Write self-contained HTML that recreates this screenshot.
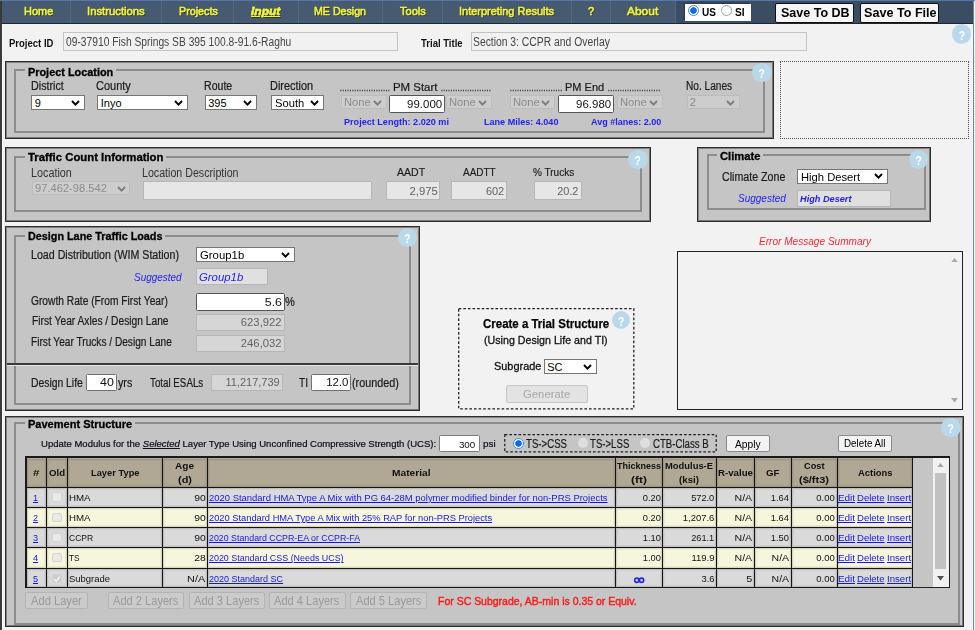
<!DOCTYPE html>
<html><head><meta charset="utf-8"><title>Input</title>
<style>
html,body{margin:0;padding:0;}
body{width:975px;height:630px;overflow:hidden;position:relative;background:#f2f2f2;font-family:"Liberation Sans",sans-serif;}
#pg{position:absolute;left:0;top:0;width:975px;height:630px;overflow:hidden;}
#pg div{position:absolute;}
.t{position:absolute;white-space:nowrap;display:block;}
a{color:#0000ee;}
</style></head>
<body><div id="pg">
<div style="left:0px;top:0px;width:2px;height:630px;background:#3a3a3a;"></div>
<div style="left:2px;top:0px;width:1px;height:630px;background:#f8f8f8;"></div>
<div style="left:972px;top:0px;width:3px;height:630px;background:#f8f8f8;"></div>
<div style="left:973px;top:0px;width:1.4px;height:630px;background:#6a86a6;"></div>
<div style="left:2px;top:0px;width:971px;height:24px;background:#465a72;"></div>
<div style="left:676px;top:0px;width:297px;height:24px;background:#3a4d63;"></div>
<div style="left:0px;top:0px;width:975px;height:1.3px;background:#5577aa;"></div>
<div style="left:2px;top:22.6px;width:971px;height:1.4px;background:#1e2630;"></div>
<div style="left:70px;top:1px;width:1px;height:22px;background:#54697f;"></div>
<div style="left:161px;top:1px;width:1px;height:22px;background:#54697f;"></div>
<div style="left:233px;top:1px;width:1px;height:22px;background:#54697f;"></div>
<div style="left:298px;top:1px;width:1px;height:22px;background:#54697f;"></div>
<div style="left:382px;top:1px;width:1px;height:22px;background:#54697f;"></div>
<div style="left:442px;top:1px;width:1px;height:22px;background:#54697f;"></div>
<div style="left:571px;top:1px;width:1px;height:22px;background:#54697f;"></div>
<div style="left:610px;top:1px;width:1px;height:22px;background:#54697f;"></div>
<div style="left:675px;top:1px;width:1px;height:22px;background:#54697f;"></div>
<span class="t" style="top:6.31px;font-size:11.4px;line-height:11.4px;height:11.4px;color:#f5f534;-webkit-text-stroke:0.55px #f5f534;text-shadow:1px 1px 0 #2a3442;left:24.32px;transform-origin:left center;transform:scaleX(0.9626);">Home</span>
<span class="t" style="top:6.31px;font-size:11.4px;line-height:11.4px;height:11.4px;color:#f5f534;-webkit-text-stroke:0.55px #f5f534;text-shadow:1px 1px 0 #2a3442;left:87.32px;transform-origin:left center;transform:scaleX(0.9915);">Instructions</span>
<span class="t" style="top:6.31px;font-size:11.4px;line-height:11.4px;height:11.4px;color:#f5f534;-webkit-text-stroke:0.55px #f5f534;text-shadow:1px 1px 0 #2a3442;left:178.82px;transform-origin:left center;transform:scaleX(0.9416);">Projects</span>
<span class="t" style="top:6.31px;font-size:11.4px;line-height:11.4px;height:11.4px;color:#f5f534;-webkit-text-stroke:0.55px #f5f534;text-shadow:1px 1px 0 #2a3442;left:314.32px;transform-origin:left center;transform:scaleX(0.9342);">ME Design</span>
<span class="t" style="top:6.31px;font-size:11.4px;line-height:11.4px;height:11.4px;color:#f5f534;-webkit-text-stroke:0.55px #f5f534;text-shadow:1px 1px 0 #2a3442;left:399.82px;transform-origin:left center;transform:scaleX(0.9684);">Tools</span>
<span class="t" style="top:6.31px;font-size:11.4px;line-height:11.4px;height:11.4px;color:#f5f534;-webkit-text-stroke:0.55px #f5f534;text-shadow:1px 1px 0 #2a3442;left:459.32px;transform-origin:left center;transform:scaleX(0.9623);">Interpreting Results</span>
<span class="t" style="top:6.31px;font-size:11.4px;line-height:11.4px;height:11.4px;color:#f5f534;-webkit-text-stroke:0.55px #f5f534;text-shadow:1px 1px 0 #2a3442;left:588.12px;transform-origin:left center;transform:scaleX(0.9859);">?</span>
<span class="t" style="top:6.31px;font-size:11.4px;line-height:11.4px;height:11.4px;color:#f5f534;-webkit-text-stroke:0.55px #f5f534;text-shadow:1px 1px 0 #2a3442;left:627.32px;transform-origin:left center;transform:scaleX(1.0495);">About</span>
<span class="t" style="top:6.31px;font-size:11.4px;line-height:11.4px;height:11.4px;color:#f5f534;font-weight:bold;font-style:italic;-webkit-text-stroke:0.35px #f5f534;text-shadow:1px 1px 0 #2a3442;text-decoration:underline;left:251.32px;transform-origin:left center;transform:scaleX(1.0506);">Input</span>
<div style="left:685px;top:4px;width:66px;height:17px;background:#fff;box-shadow:-1.5px -1.5px 0 #2d3c4f;"></div>
<div style="left:688.2px;top:5.3px;width:11px;height:11px;box-sizing:border-box;border-radius:50%;border:1.5px solid #3f8cff;background:radial-gradient(circle,#0a68ff 0,#0a68ff 2.9px,#fff 3.6px);"></div>
<span class="t" style="top:7.06px;font-size:11.5px;line-height:11.5px;height:11.5px;color:#000;font-weight:bold;left:701.91px;transform-origin:left center;transform:scaleX(0.8737);">US</span>
<div style="left:721.3px;top:5.2px;width:11px;height:11px;box-sizing:border-box;border-radius:50%;border:1.4px solid #a2a2a2;background:#fff;"></div>
<span class="t" style="top:7.06px;font-size:11.5px;line-height:11.5px;height:11.5px;color:#000;font-weight:bold;left:734.51px;transform-origin:left center;transform:scaleX(0.8887);">SI</span>
<div style="left:775px;top:3px;width:79px;height:19.5px;box-sizing:border-box;background:#f6f6f6;border:1.5px solid #111;border-radius:2px;"></div>
<span class="t" style="top:6.03px;font-size:13px;line-height:13px;height:13px;color:#000;font-weight:bold;left:781.02px;transform-origin:left center;transform:scaleX(0.9628);">Save To DB</span>
<div style="left:860px;top:3px;width:79px;height:19.5px;box-sizing:border-box;background:#f6f6f6;border:1.5px solid #111;border-radius:2px;"></div>
<span class="t" style="top:6.03px;font-size:13px;line-height:13px;height:13px;color:#000;font-weight:bold;left:864.02px;transform-origin:left center;transform:scaleX(0.9696);">Save To File</span>
<span class="t" style="top:38.60px;font-size:10px;line-height:10px;height:10px;color:#111;font-weight:bold;left:9.4px;transform-origin:left center;transform:scaleX(0.9510);">Project ID</span>
<div style="left:63px;top:32px;width:335px;height:19px;box-sizing:border-box;background:#f1f1f1;border:1px solid #c4c4c4;"></div>
<span class="t" style="top:36.42px;font-size:12px;line-height:12px;height:12px;color:#454545;left:66.08px;transform-origin:left center;transform:scaleX(0.8551);">09-37910 Fish Springs SB 395 100.8-91.6-Raghu</span>
<span class="t" style="top:38.60px;font-size:10px;line-height:10px;height:10px;color:#111;font-weight:bold;left:421.4px;transform-origin:left center;transform:scaleX(0.9512);">Trial Title</span>
<div style="left:471px;top:32px;width:336px;height:19px;box-sizing:border-box;background:#f1f1f1;border:1px solid #c4c4c4;"></div>
<span class="t" style="top:36.42px;font-size:12px;line-height:12px;height:12px;color:#454545;left:473.08px;transform-origin:left center;transform:scaleX(0.8619);">Section 3: CCPR and Overlay</span>
<div style="left:951.7px;top:24.3px;width:19.8px;height:19.8px;border-radius:50%;background:#b9d9ea;"><span style="position:absolute;left:0;right:0;top:5.5px;text-align:center;font:bold 12px/13px 'Liberation Sans',sans-serif;color:#fff;transform:scaleX(0.86);">?</span></div>
<div style="left:5px;top:61px;width:769px;height:78px;box-sizing:border-box;background:#c5c5c5;border:1px solid #2e2e2e;box-shadow:inset 1px 1px 0 #828282,inset -1px -1px 0 #767676;"></div>
<div style="left:14px;top:69px;width:751px;height:64px;box-sizing:border-box;border:2px solid #8c8c8c;"></div>
<div style="left:25px;top:65px;width:91px;height:12px;background:#c5c5c5;"></div>
<span class="t" style="top:66.51px;font-size:10.8px;line-height:10.8px;height:10.8px;color:#000;font-weight:bold;-webkit-text-stroke:0.3px #000;left:28.35px;transform-origin:left center;transform:scaleX(1.0070);">Project Location</span>
<span class="t" style="top:80.22px;font-size:12px;line-height:12px;height:12px;color:#1c1c1c;-webkit-text-stroke:0.22px #1c1c1c;left:31.28px;transform-origin:left center;transform:scaleX(0.8950);">District</span>
<span class="t" style="top:80.22px;font-size:12px;line-height:12px;height:12px;color:#1c1c1c;-webkit-text-stroke:0.22px #1c1c1c;left:96.28px;transform-origin:left center;transform:scaleX(0.9156);">County</span>
<span class="t" style="top:80.22px;font-size:12px;line-height:12px;height:12px;color:#1c1c1c;-webkit-text-stroke:0.22px #1c1c1c;left:203.88px;transform-origin:left center;transform:scaleX(0.8810);">Route</span>
<span class="t" style="top:80.22px;font-size:12px;line-height:12px;height:12px;color:#1c1c1c;-webkit-text-stroke:0.22px #1c1c1c;left:270.08px;transform-origin:left center;transform:scaleX(0.9105);">Direction</span>
<div style="left:31px;top:95px;width:54px;height:15px;box-sizing:border-box;background:#fff;border:1px solid #767676;border-radius:0;"><svg style="position:absolute;right:4px;top:50%;margin-top:-3px" width="9" height="6" viewBox="0 0 9 6"><path d="M1 1 L4.5 4.6 L8 1" fill="none" stroke="#000" stroke-width="1.9"/></svg></div>
<span class="t" style="top:97.81px;font-size:11px;line-height:11px;height:11px;color:#000;left:34.74px;transform-origin:left center;">9</span>
<div style="left:97px;top:95px;width:90.5px;height:15px;box-sizing:border-box;background:#fff;border:1px solid #767676;border-radius:0;"><svg style="position:absolute;right:4px;top:50%;margin-top:-3px" width="9" height="6" viewBox="0 0 9 6"><path d="M1 1 L4.5 4.6 L8 1" fill="none" stroke="#000" stroke-width="1.9"/></svg></div>
<span class="t" style="top:97.81px;font-size:11px;line-height:11px;height:11px;color:#000;left:100.74px;transform-origin:left center;">Inyo</span>
<div style="left:204.5px;top:95px;width:52.5px;height:15px;box-sizing:border-box;background:#fff;border:1px solid #767676;border-radius:0;"><svg style="position:absolute;right:4px;top:50%;margin-top:-3px" width="9" height="6" viewBox="0 0 9 6"><path d="M1 1 L4.5 4.6 L8 1" fill="none" stroke="#000" stroke-width="1.9"/></svg></div>
<span class="t" style="top:97.81px;font-size:11px;line-height:11px;height:11px;color:#000;left:208.24px;transform-origin:left center;">395</span>
<div style="left:271px;top:95px;width:53px;height:15px;box-sizing:border-box;background:#fff;border:1px solid #767676;border-radius:0;"><svg style="position:absolute;right:4px;top:50%;margin-top:-3px" width="9" height="6" viewBox="0 0 9 6"><path d="M1 1 L4.5 4.6 L8 1" fill="none" stroke="#000" stroke-width="1.9"/></svg></div>
<span class="t" style="top:97.81px;font-size:11px;line-height:11px;height:11px;color:#000;left:274.74px;transform-origin:left center;transform:scaleX(1.0160);">South</span>
<div style="left:340px;top:89.3px;width:50.5px;height:3px;"><svg width="50.5" height="3" viewBox="0 0 50.5 3" style="position:absolute;left:0;top:0"><line x1="0.3" y1="1.5" x2="50.5" y2="1.5" stroke="#3c3c3c" stroke-width="1.3" stroke-dasharray="1.1 1.3"/></svg></div>
<span class="t" style="top:82.31px;font-size:11.2px;line-height:11.2px;height:11.2px;color:#1c1c1c;-webkit-text-stroke:0.22px #1c1c1c;left:393.13px;transform-origin:left center;transform:scaleX(1.0211);">PM Start</span>
<div style="left:441px;top:89.3px;width:50px;height:3px;"><svg width="50" height="3" viewBox="0 0 50 3" style="position:absolute;left:0;top:0"><line x1="0.3" y1="1.5" x2="50" y2="1.5" stroke="#3c3c3c" stroke-width="1.3" stroke-dasharray="1.1 1.3"/></svg></div>
<div style="left:341px;top:95px;width:45.5px;height:14px;box-sizing:border-box;background:#cdcdcd;border:1px solid #bcbcbc;border-radius:1px;"><svg style="position:absolute;right:4px;top:50%;margin-top:-2.2px" width="9" height="6" viewBox="0 0 9 6"><path d="M1 1 L4.5 4.6 L8 1" fill="none" stroke="#7e7e7e" stroke-width="1.9"/></svg></div>
<span class="t" style="top:96.81px;font-size:11px;line-height:11px;height:11px;color:#8c8c8c;left:344.14px;transform-origin:left center;transform:scaleX(1.0195);">None</span>
<div style="left:389px;top:95px;width:56px;height:17.5px;box-sizing:border-box;background:#fff;border:1px solid #555;border-radius:1.5px;"></div>
<span class="t" style="top:98.91px;font-size:11.5px;line-height:11.5px;height:11.5px;color:#111;right:533px;transform-origin:right center;transform:scaleX(0.9965);">99.000</span>
<div style="left:446px;top:95px;width:46px;height:14px;box-sizing:border-box;background:#cdcdcd;border:1px solid #bcbcbc;border-radius:1px;"><svg style="position:absolute;right:4px;top:50%;margin-top:-2.2px" width="9" height="6" viewBox="0 0 9 6"><path d="M1 1 L4.5 4.6 L8 1" fill="none" stroke="#7e7e7e" stroke-width="1.9"/></svg></div>
<span class="t" style="top:96.81px;font-size:11px;line-height:11px;height:11px;color:#8c8c8c;left:449.14px;transform-origin:left center;transform:scaleX(1.0195);">None</span>
<div style="left:509.5px;top:89.3px;width:53.5px;height:3px;"><svg width="53.5" height="3" viewBox="0 0 53.5 3" style="position:absolute;left:0;top:0"><line x1="0.3" y1="1.5" x2="53.5" y2="1.5" stroke="#3c3c3c" stroke-width="1.3" stroke-dasharray="1.1 1.3"/></svg></div>
<span class="t" style="top:82.31px;font-size:11.2px;line-height:11.2px;height:11.2px;color:#1c1c1c;-webkit-text-stroke:0.22px #1c1c1c;left:565.33px;transform-origin:left center;transform:scaleX(0.9858);">PM End</span>
<div style="left:608px;top:89.3px;width:52px;height:3px;"><svg width="52" height="3" viewBox="0 0 52 3" style="position:absolute;left:0;top:0"><line x1="0.3" y1="1.5" x2="52" y2="1.5" stroke="#3c3c3c" stroke-width="1.3" stroke-dasharray="1.1 1.3"/></svg></div>
<div style="left:509.5px;top:95px;width:45.5px;height:14px;box-sizing:border-box;background:#cdcdcd;border:1px solid #bcbcbc;border-radius:1px;"><svg style="position:absolute;right:4px;top:50%;margin-top:-2.2px" width="9" height="6" viewBox="0 0 9 6"><path d="M1 1 L4.5 4.6 L8 1" fill="none" stroke="#7e7e7e" stroke-width="1.9"/></svg></div>
<span class="t" style="top:96.81px;font-size:11px;line-height:11px;height:11px;color:#8c8c8c;left:512.64px;transform-origin:left center;transform:scaleX(1.0195);">None</span>
<div style="left:558px;top:95px;width:56px;height:17.5px;box-sizing:border-box;background:#fff;border:1px solid #555;border-radius:1.5px;"></div>
<span class="t" style="top:98.91px;font-size:11.5px;line-height:11.5px;height:11.5px;color:#111;right:364px;transform-origin:right center;transform:scaleX(0.9965);">96.980</span>
<div style="left:617px;top:95px;width:45.5px;height:14px;box-sizing:border-box;background:#cdcdcd;border:1px solid #bcbcbc;border-radius:1px;"><svg style="position:absolute;right:4px;top:50%;margin-top:-2.2px" width="9" height="6" viewBox="0 0 9 6"><path d="M1 1 L4.5 4.6 L8 1" fill="none" stroke="#7e7e7e" stroke-width="1.9"/></svg></div>
<span class="t" style="top:96.81px;font-size:11px;line-height:11px;height:11px;color:#8c8c8c;left:620.14px;transform-origin:left center;transform:scaleX(1.0195);">None</span>
<span class="t" style="top:118.14px;font-size:9.3px;line-height:9.3px;height:9.3px;color:#2222ee;font-weight:bold;left:344.04px;transform-origin:left center;transform:scaleX(0.9763);">Project Length: 2.020 mi</span>
<span class="t" style="top:118.14px;font-size:9.3px;line-height:9.3px;height:9.3px;color:#2222ee;font-weight:bold;left:484.04px;transform-origin:left center;transform:scaleX(0.9730);">Lane Miles: 4.040</span>
<span class="t" style="top:118.14px;font-size:9.3px;line-height:9.3px;height:9.3px;color:#2222ee;font-weight:bold;left:591.24px;transform-origin:left center;transform:scaleX(0.9682);">Avg #lanes: 2.00</span>
<span class="t" style="top:80.22px;font-size:12px;line-height:12px;height:12px;color:#1c1c1c;-webkit-text-stroke:0.22px #1c1c1c;left:685.98px;transform-origin:left center;transform:scaleX(0.8431);">No. Lanes</span>
<div style="left:686.5px;top:95px;width:53px;height:14px;box-sizing:border-box;background:#cdcdcd;border:1px solid #bcbcbc;border-radius:1px;"><svg style="position:absolute;right:4px;top:50%;margin-top:-2.2px" width="9" height="6" viewBox="0 0 9 6"><path d="M1 1 L4.5 4.6 L8 1" fill="none" stroke="#7e7e7e" stroke-width="1.9"/></svg></div>
<span class="t" style="top:96.81px;font-size:11px;line-height:11px;height:11px;color:#8c8c8c;left:689.64px;transform-origin:left center;">2</span>
<div style="left:752.2px;top:63.1px;width:19.4px;height:19.4px;border-radius:50%;background:#b9d9ea;"><span style="position:absolute;left:0;right:0;top:5.3px;text-align:center;font:bold 12px/13px 'Liberation Sans',sans-serif;color:#fff;transform:scaleX(0.86);">?</span></div>
<div style="left:780px;top:61px;width:189px;height:78px;box-sizing:border-box;border:1px dotted #505050;"></div>
<div style="left:5px;top:147px;width:646px;height:75px;box-sizing:border-box;background:#c5c5c5;border:1px solid #2e2e2e;box-shadow:inset 1px 1px 0 #828282,inset -1px -1px 0 #767676;"></div>
<div style="left:14px;top:156px;width:628px;height:55.5px;box-sizing:border-box;border:2px solid #8c8c8c;"></div>
<div style="left:25px;top:152px;width:141.3px;height:12px;background:#c5c5c5;"></div>
<span class="t" style="top:152.21px;font-size:10.8px;line-height:10.8px;height:10.8px;color:#000;font-weight:bold;-webkit-text-stroke:0.3px #000;left:28.35px;transform-origin:left center;transform:scaleX(1.0505);">Traffic Count Information</span>
<span class="t" style="top:166.62px;font-size:12px;line-height:12px;height:12px;color:#333;left:30.78px;transform-origin:left center;transform:scaleX(0.8996);">Location</span>
<span class="t" style="top:166.62px;font-size:12px;line-height:12px;height:12px;color:#333;left:142.08px;transform-origin:left center;transform:scaleX(0.8877);">Location Description</span>
<div style="left:31.5px;top:181.4px;width:98px;height:14.1px;box-sizing:border-box;background:#cdcdcd;border:1px solid #bcbcbc;border-radius:1px;"><svg style="position:absolute;right:3px;top:50%;margin-top:-2.2px" width="9" height="6" viewBox="0 0 9 6"><path d="M1 1 L4.5 4.6 L8 1" fill="none" stroke="#7e7e7e" stroke-width="1.9"/></svg></div>
<span class="t" style="top:183.26px;font-size:11px;line-height:11px;height:11px;color:#8c8c8c;left:34.64px;transform-origin:left center;transform:scaleX(1.0135);">97.462-98.542</span>
<div style="left:142.8px;top:181px;width:229.2px;height:19px;box-sizing:border-box;background:#e6e6e6;border:1px solid #b6b6b6;"></div>
<span class="t" style="top:166.71px;font-size:11px;line-height:11px;height:11px;color:#1a1a1a;-webkit-text-stroke:0.15px #1a1a1a;left:397.04px;transform-origin:left center;transform:scaleX(0.9580);">AADT</span>
<span class="t" style="top:166.71px;font-size:11px;line-height:11px;height:11px;color:#1a1a1a;-webkit-text-stroke:0.15px #1a1a1a;left:463.34px;transform-origin:left center;transform:scaleX(0.9070);">AADTT</span>
<span class="t" style="top:166.71px;font-size:11px;line-height:11px;height:11px;color:#1a1a1a;-webkit-text-stroke:0.15px #1a1a1a;left:533.34px;transform-origin:left center;transform:scaleX(0.9110);">% Trucks</span>
<div style="left:385.6px;top:181px;width:54.8px;height:19px;box-sizing:border-box;background:#e6e6e6;border:1px solid #b6b6b6;"></div>
<span class="t" style="top:185.67px;font-size:11.5px;line-height:11.5px;height:11.5px;color:#626262;right:537.6px;transform-origin:right center;transform:scaleX(0.9821);">2,975</span>
<div style="left:451.2px;top:181px;width:55.5px;height:19px;box-sizing:border-box;background:#e6e6e6;border:1px solid #b6b6b6;"></div>
<span class="t" style="top:185.67px;font-size:11.5px;line-height:11.5px;height:11.5px;color:#626262;right:471.3px;transform-origin:right center;transform:scaleX(0.9519);">602</span>
<div style="left:534px;top:181px;width:47.5px;height:19px;box-sizing:border-box;background:#e6e6e6;border:1px solid #b6b6b6;"></div>
<span class="t" style="top:185.67px;font-size:11.5px;line-height:11.5px;height:11.5px;color:#626262;right:396.5px;transform-origin:right center;transform:scaleX(0.9497);">20.2</span>
<div style="left:628.2px;top:150.1px;width:19.4px;height:19.4px;border-radius:50%;background:#b9d9ea;"><span style="position:absolute;left:0;right:0;top:5.3px;text-align:center;font:bold 12px/13px 'Liberation Sans',sans-serif;color:#fff;transform:scaleX(0.86);">?</span></div>
<div style="left:697px;top:147px;width:234px;height:75px;box-sizing:border-box;background:#c5c5c5;border:1px solid #2e2e2e;box-shadow:inset 1px 1px 0 #828282,inset -1px -1px 0 #767676;"></div>
<div style="left:707px;top:154px;width:219px;height:56px;box-sizing:border-box;border:2px solid #8c8c8c;"></div>
<div style="left:716.8px;top:150px;width:46.2px;height:12px;background:#c5c5c5;"></div>
<span class="t" style="top:150.61px;font-size:10.8px;line-height:10.8px;height:10.8px;color:#000;font-weight:bold;-webkit-text-stroke:0.3px #000;left:720.15px;transform-origin:left center;transform:scaleX(1.0352);">Climate</span>
<span class="t" style="top:171.12px;font-size:12px;line-height:12px;height:12px;color:#1c1c1c;-webkit-text-stroke:0.22px #1c1c1c;left:722.28px;transform-origin:left center;transform:scaleX(0.8871);">Climate Zone</span>
<div style="left:797px;top:169px;width:90.5px;height:14.5px;box-sizing:border-box;background:#fff;border:1px solid #767676;border-radius:0;"><svg style="position:absolute;right:4px;top:50%;margin-top:-3px" width="9" height="6" viewBox="0 0 9 6"><path d="M1 1 L4.5 4.6 L8 1" fill="none" stroke="#000" stroke-width="1.9"/></svg></div>
<span class="t" style="top:171.56px;font-size:11px;line-height:11px;height:11px;color:#000;left:800.74px;transform-origin:left center;transform:scaleX(1.0195);">High Desert</span>
<span class="t" style="top:193.06px;font-size:11.5px;line-height:11.5px;height:11.5px;color:#2222ee;font-style:italic;left:737.71px;transform-origin:left center;transform:scaleX(0.8703);">Suggested</span>
<div style="left:797px;top:190px;width:94px;height:16.5px;box-sizing:border-box;background:#e0e0e0;border:1px solid #b6b6b6;"></div>
<span class="t" style="top:194.54px;font-size:9.2px;line-height:9.2px;height:9.2px;color:#2222ee;font-weight:bold;font-style:italic;left:800.45px;transform-origin:left center;transform:scaleX(0.9987);">High Desert</span>
<div style="left:908.9px;top:150.1px;width:19.4px;height:19.4px;border-radius:50%;background:#b9d9ea;"><span style="position:absolute;left:0;right:0;top:5.3px;text-align:center;font:bold 12px/13px 'Liberation Sans',sans-serif;color:#fff;transform:scaleX(0.86);">?</span></div>
<div style="left:5px;top:226px;width:415px;height:185px;box-sizing:border-box;background:#c5c5c5;border:1px solid #2e2e2e;box-shadow:inset 1px 1px 0 #828282,inset -1px -1px 0 #767676;"></div>
<div style="left:7px;top:362.5px;width:411px;height:2px;background:#3a3a3a;"></div>
<div style="left:7px;top:364.5px;width:411px;height:1px;background:#e4e4e4;"></div>
<div style="left:14px;top:235px;width:397px;height:170px;box-sizing:border-box;border:2px solid #8c8c8c;"></div>
<div style="left:24.7px;top:231px;width:140.3px;height:12px;background:#c5c5c5;"></div>
<span class="t" style="top:231.01px;font-size:10.8px;line-height:10.8px;height:10.8px;color:#000;font-weight:bold;-webkit-text-stroke:0.3px #000;left:28.05px;transform-origin:left center;transform:scaleX(1.0006);">Design Lane Traffic Loads</span>
<div style="left:7px;top:362.5px;width:411px;height:2px;background:#3a3a3a;"></div>
<div style="left:7px;top:364.5px;width:411px;height:1.2px;background:#e6e6e6;"></div>
<span class="t" style="top:249.42px;font-size:12px;line-height:12px;height:12px;color:#1c1c1c;-webkit-text-stroke:0.22px #1c1c1c;left:30.78px;transform-origin:left center;transform:scaleX(0.8878);">Load Distribution (WIM Station)</span>
<div style="left:196px;top:247px;width:98.5px;height:15px;box-sizing:border-box;background:#fff;border:1px solid #767676;border-radius:0;"><svg style="position:absolute;right:4px;top:50%;margin-top:-3px" width="9" height="6" viewBox="0 0 9 6"><path d="M1 1 L4.5 4.6 L8 1" fill="none" stroke="#000" stroke-width="1.9"/></svg></div>
<span class="t" style="top:249.81px;font-size:11px;line-height:11px;height:11px;color:#000;left:199.74px;transform-origin:left center;transform:scaleX(1.0326);">Group1b</span>
<span class="t" style="top:272.06px;font-size:11.5px;line-height:11.5px;height:11.5px;color:#2222ee;font-style:italic;left:133.81px;transform-origin:left center;transform:scaleX(0.8648);">Suggested</span>
<div style="left:196px;top:268.4px;width:72px;height:17.1px;box-sizing:border-box;background:#e0e0e0;border:1px solid #b6b6b6;"></div>
<span class="t" style="top:272.36px;font-size:11px;line-height:11px;height:11px;color:#2222ee;font-style:italic;left:199.34px;transform-origin:left center;transform:scaleX(1.0326);">Group1b</span>
<span class="t" style="top:295.12px;font-size:12px;line-height:12px;height:12px;color:#1c1c1c;-webkit-text-stroke:0.22px #1c1c1c;left:30.78px;transform-origin:left center;transform:scaleX(0.8513);">Growth Rate (From First Year)</span>
<div style="left:196px;top:293px;width:88.5px;height:17.5px;box-sizing:border-box;background:#fff;border:1px solid #555;border-radius:1.5px;"></div>
<span class="t" style="top:296.92px;font-size:11.5px;line-height:11.5px;height:11.5px;color:#111;right:693.5px;transform-origin:right center;transform:scaleX(1.0791);">5.6</span>
<span class="t" style="top:296.12px;font-size:12px;line-height:12px;height:12px;color:#1c1c1c;-webkit-text-stroke:0.22px #1c1c1c;left:285.28px;transform-origin:left center;transform:scaleX(0.9202);">%</span>
<span class="t" style="top:315.42px;font-size:12px;line-height:12px;height:12px;color:#1c1c1c;-webkit-text-stroke:0.22px #1c1c1c;left:31.68px;transform-origin:left center;transform:scaleX(0.8528);">First Year Axles / Design Lane</span>
<div style="left:196px;top:313.5px;width:88.5px;height:17.5px;box-sizing:border-box;background:#d6d6d6;border:1px solid #b6b6b6;"></div>
<span class="t" style="top:317.42px;font-size:11.5px;line-height:11.5px;height:11.5px;color:#626262;right:693.5px;transform-origin:right center;transform:scaleX(0.9804);">623,922</span>
<span class="t" style="top:336.22px;font-size:12px;line-height:12px;height:12px;color:#1c1c1c;-webkit-text-stroke:0.22px #1c1c1c;left:30.78px;transform-origin:left center;transform:scaleX(0.8445);">First Year Trucks / Design Lane</span>
<div style="left:196px;top:334.5px;width:88.5px;height:17.5px;box-sizing:border-box;background:#d6d6d6;border:1px solid #b6b6b6;"></div>
<span class="t" style="top:338.42px;font-size:11.5px;line-height:11.5px;height:11.5px;color:#626262;right:693.5px;transform-origin:right center;transform:scaleX(0.9804);">246,032</span>
<div style="left:397.9px;top:227.9px;width:19px;height:19px;border-radius:50%;background:#b9d9ea;"><span style="position:absolute;left:0;right:0;top:5.1px;text-align:center;font:bold 12px/13px 'Liberation Sans',sans-serif;color:#fff;transform:scaleX(0.86);">?</span></div>
<span class="t" style="top:377.12px;font-size:12px;line-height:12px;height:12px;color:#1c1c1c;-webkit-text-stroke:0.22px #1c1c1c;left:30.78px;transform-origin:left center;transform:scaleX(0.8630);">Design Life</span>
<div style="left:86px;top:373.5px;width:31px;height:17.5px;box-sizing:border-box;background:#fff;border:1px solid #707070;border-radius:1.5px;"></div>
<span class="t" style="top:377.42px;font-size:11.5px;line-height:11.5px;height:11.5px;color:#111;right:861px;transform-origin:right center;transform:scaleX(1.0757);">40</span>
<span class="t" style="top:377.42px;font-size:12px;line-height:12px;height:12px;color:#1c1c1c;-webkit-text-stroke:0.22px #1c1c1c;left:118.28px;transform-origin:left center;transform:scaleX(0.8888);">yrs</span>
<span class="t" style="top:377.12px;font-size:12px;line-height:12px;height:12px;color:#1c1c1c;-webkit-text-stroke:0.22px #1c1c1c;left:150.28px;transform-origin:left center;transform:scaleX(0.8141);">Total ESALs</span>
<div style="left:210.5px;top:373.5px;width:72.5px;height:17px;box-sizing:border-box;background:#d6d6d6;border:1px solid #b6b6b6;"></div>
<span class="t" style="top:377.17px;font-size:11.5px;line-height:11.5px;height:11.5px;color:#626262;right:695px;transform-origin:right center;transform:scaleX(0.9570);">11,217,739</span>
<span class="t" style="top:377.12px;font-size:12px;line-height:12px;height:12px;color:#1c1c1c;-webkit-text-stroke:0.22px #1c1c1c;left:298.58px;transform-origin:left center;transform:scaleX(0.8452);">TI</span>
<div style="left:311px;top:373.5px;width:40px;height:17.5px;box-sizing:border-box;background:#fff;border:1px solid #707070;border-radius:1.5px;"></div>
<span class="t" style="top:377.42px;font-size:11.5px;line-height:11.5px;height:11.5px;color:#111;right:627px;transform-origin:right center;transform:scaleX(0.9944);">12.0</span>
<span class="t" style="top:377.12px;font-size:12px;line-height:12px;height:12px;color:#1c1c1c;-webkit-text-stroke:0.22px #1c1c1c;left:352.18px;transform-origin:left center;transform:scaleX(0.9018);">(rounded)</span>
<div style="left:458px;top:308px;width:176.5px;height:101.5px;"><svg width="176.5" height="101.5" viewBox="0 0 176.5 101.5" style="position:absolute;left:0;top:0"><rect x="0.7" y="0.7" width="175.1" height="100.1" fill="none" stroke="#1e1e1e" stroke-width="1.25" stroke-dasharray="2.6 2"/></svg></div>
<span class="t" style="top:317.13px;font-size:13px;line-height:13px;height:13px;color:#000;font-weight:bold;-webkit-text-stroke:0.25px #000;left:483.22px;transform-origin:left center;transform:scaleX(0.8823);">Create a Trial Structure</span>
<span class="t" style="top:335.37px;font-size:11.5px;line-height:11.5px;height:11.5px;color:#111;-webkit-text-stroke:0.3px #111;left:484.31px;transform-origin:left center;transform:scaleX(0.9271);">(Using Design Life and TI)</span>
<span class="t" style="top:361.06px;font-size:11.5px;line-height:11.5px;height:11.5px;color:#111;-webkit-text-stroke:0.3px #111;left:494.11px;transform-origin:left center;transform:scaleX(0.9497);">Subgrade</span>
<div style="left:543.5px;top:359px;width:53.5px;height:15px;box-sizing:border-box;background:#fff;border:1px solid #767676;border-radius:0;"><svg style="position:absolute;right:4px;top:50%;margin-top:-3px" width="9" height="6" viewBox="0 0 9 6"><path d="M1 1 L4.5 4.6 L8 1" fill="none" stroke="#000" stroke-width="1.9"/></svg></div>
<span class="t" style="top:361.81px;font-size:11px;line-height:11px;height:11px;color:#000;left:547.24px;transform-origin:left center;">SC</span>
<div style="left:505.5px;top:385px;width:82.5px;height:18px;box-sizing:border-box;background:#e3e3e3;border:1px solid #c6c6c6;border-radius:2px;"></div>
<span class="t" style="top:389.06px;font-size:11.5px;line-height:11.5px;height:11.5px;color:#a8a8a8;left:523.06px;transform-origin:left center;transform:scaleX(0.9857);">Generate</span>
<div style="left:612px;top:310.8px;width:18.4px;height:18.4px;border-radius:50%;background:#b9d9ea;"><span style="position:absolute;left:0;right:0;top:4.8px;text-align:center;font:bold 12px/13px 'Liberation Sans',sans-serif;color:#fff;transform:scaleX(0.86);">?</span></div>
<span class="t" style="top:236.31px;font-size:11px;line-height:11px;height:11px;color:#f02a3a;font-style:italic;left:758.54px;transform-origin:left center;transform:scaleX(0.9161);">Error Message Summary</span>
<div style="left:676.5px;top:250.5px;width:286.5px;height:159px;box-sizing:border-box;border:1px solid #222;background:#f2f2f2;"></div>
<div style="left:950.5px;top:257.5px;width:7px;height:4.5px;"><svg width="7" height="4.5" viewBox="0 0 7 4.5" style="position:absolute;left:0;top:0"><path d="M0 4.5 L3.5 0 L7 4.5Z" fill="#a8a8a8"/></svg></div>
<div style="left:950.5px;top:398px;width:7px;height:4.5px;"><svg width="7" height="4.5" viewBox="0 0 7 4.5" style="position:absolute;left:0;top:0"><path d="M0 0 L3.5 4.5 L7 0Z" fill="#a8a8a8"/></svg></div>
<div style="left:5px;top:416px;width:959px;height:211px;box-sizing:border-box;background:#c5c5c5;border:1px solid #2e2e2e;box-shadow:inset 1px 1px 0 #828282,inset -1px -1px 0 #767676;"></div>
<div style="left:14px;top:422px;width:946px;height:203px;box-sizing:border-box;border:2px solid #8c8c8c;"></div>
<div style="left:25px;top:418px;width:110px;height:12px;background:#c5c5c5;"></div>
<span class="t" style="top:419.11px;font-size:10.8px;line-height:10.8px;height:10.8px;color:#000;font-weight:bold;-webkit-text-stroke:0.3px #000;left:28.35px;transform-origin:left center;transform:scaleX(1.0213);">Pavement Structure</span>
<span class="t" style="top:440.09px;font-size:9px;line-height:9px;height:9px;color:#0e0e1c;-webkit-text-stroke:0.2px #0e0e1c;left:41.26px;transform-origin:left center;transform:scaleX(1.0594);">Update Modulus for the <i style="text-decoration:underline">Selected</i> Layer Type Using Unconfined Compressive Strength (UCS):</span>
<div style="left:439px;top:435px;width:41px;height:17px;box-sizing:border-box;background:#fff;border:1px solid #7c7c7c;border-radius:1.5px;"></div>
<span class="t" style="top:439.50px;font-size:9.8px;line-height:9.8px;height:9.8px;color:#111;right:499.4px;transform-origin:right center;transform:scaleX(1.0073);">300</span>
<span class="t" style="top:440.49px;font-size:9px;line-height:9px;height:9px;color:#0e0e1c;-webkit-text-stroke:0.2px #0e0e1c;left:483.26px;transform-origin:left center;transform:scaleX(1.0933);">psi</span>
<div style="left:504px;top:434px;width:213px;height:18.7px;"><svg width="213" height="18.69999999999999" viewBox="0 0 213 18.69999999999999" style="position:absolute;left:0;top:0"><rect x="0.7" y="0.7" width="211.6" height="17.29999999999999" fill="none" stroke="#1e1e1e" stroke-width="1.25" stroke-dasharray="2.6 2"/></svg></div>
<div style="left:513px;top:437.8px;width:11px;height:11px;box-sizing:border-box;border-radius:50%;border:1.5px solid #3f8cff;background:radial-gradient(circle,#0a68ff 0,#0a68ff 2.9px,#fff 3.6px);"></div>
<span class="t" style="top:438.42px;font-size:12px;line-height:12px;height:12px;color:#1c1c1c;-webkit-text-stroke:0.22px #1c1c1c;left:526.28px;transform-origin:left center;transform:scaleX(0.8041);">TS-&gt;CSS</span>
<div style="left:578px;top:438.3px;width:10px;height:10px;border-radius:50%;background:#dedede;"></div>
<span class="t" style="top:438.42px;font-size:12px;line-height:12px;height:12px;color:#1c1c1c;-webkit-text-stroke:0.22px #1c1c1c;left:590.28px;transform-origin:left center;transform:scaleX(0.8019);">TS-&gt;LSS</span>
<div style="left:640px;top:438.3px;width:10px;height:10px;border-radius:50%;background:#dedede;"></div>
<span class="t" style="top:438.42px;font-size:12px;line-height:12px;height:12px;color:#1c1c1c;-webkit-text-stroke:0.22px #1c1c1c;left:652.88px;transform-origin:left center;transform:scaleX(0.8035);">CTB-Class B</span>
<div style="left:725.5px;top:435px;width:44.5px;height:16.5px;box-sizing:border-box;background:#f3f3f3;border:1px solid #8a8a8a;border-radius:2px;"></div>
<span class="t" style="top:438.81px;font-size:10.5px;line-height:10.5px;height:10.5px;color:#000;left:734.87px;transform-origin:left center;transform:scaleX(0.9768);">Apply</span>
<div style="left:837.5px;top:435px;width:54.5px;height:16.5px;box-sizing:border-box;background:#f3f3f3;border:1px solid #8a8a8a;border-radius:2px;"></div>
<span class="t" style="top:439.05px;font-size:10px;line-height:10px;height:10px;color:#000;left:844.0px;transform-origin:left center;transform:scaleX(0.9799);">Delete All</span>
<div style="left:941.3px;top:417.7px;width:19.4px;height:19.4px;border-radius:50%;background:#b9d9ea;"><span style="position:absolute;left:0;right:0;top:5.3px;text-align:center;font:bold 12px/13px 'Liberation Sans',sans-serif;color:#fff;transform:scaleX(0.86);">?</span></div>
<div style="left:25px;top:456px;width:925px;height:132px;box-sizing:border-box;background:#c5c5c5;border:1px solid #222;"></div>
<div style="left:25px;top:457px;width:888px;height:30px;background:#b0a894;"></div>
<div style="left:25px;top:487px;width:888px;height:20.5px;background:#dadada;"></div>
<div style="left:25px;top:507.5px;width:888px;height:20.5px;background:#f6f6dc;"></div>
<div style="left:25px;top:528px;width:888px;height:20px;background:#dadada;"></div>
<div style="left:25px;top:548px;width:888px;height:20.5px;background:#f6f6dc;"></div>
<div style="left:25px;top:568.5px;width:888px;height:18.5px;background:#dadada;"></div>
<div style="left:27px;top:459px;width:19px;height:28px;box-shadow:inset 0 0 0 1px rgba(60,60,60,0.12),inset 0 0 0 2px rgba(60,60,60,0.05);"></div>
<div style="left:47px;top:459px;width:20px;height:28px;box-shadow:inset 0 0 0 1px rgba(60,60,60,0.12),inset 0 0 0 2px rgba(60,60,60,0.05);"></div>
<div style="left:68px;top:459px;width:94px;height:28px;box-shadow:inset 0 0 0 1px rgba(60,60,60,0.12),inset 0 0 0 2px rgba(60,60,60,0.05);"></div>
<div style="left:163px;top:459px;width:44px;height:28px;box-shadow:inset 0 0 0 1px rgba(60,60,60,0.12),inset 0 0 0 2px rgba(60,60,60,0.05);"></div>
<div style="left:208px;top:459px;width:407px;height:28px;box-shadow:inset 0 0 0 1px rgba(60,60,60,0.12),inset 0 0 0 2px rgba(60,60,60,0.05);"></div>
<div style="left:616px;top:459px;width:46px;height:28px;box-shadow:inset 0 0 0 1px rgba(60,60,60,0.12),inset 0 0 0 2px rgba(60,60,60,0.05);"></div>
<div style="left:663px;top:459px;width:53px;height:28px;box-shadow:inset 0 0 0 1px rgba(60,60,60,0.12),inset 0 0 0 2px rgba(60,60,60,0.05);"></div>
<div style="left:717px;top:459px;width:37px;height:28px;box-shadow:inset 0 0 0 1px rgba(60,60,60,0.12),inset 0 0 0 2px rgba(60,60,60,0.05);"></div>
<div style="left:755px;top:459px;width:36px;height:28px;box-shadow:inset 0 0 0 1px rgba(60,60,60,0.12),inset 0 0 0 2px rgba(60,60,60,0.05);"></div>
<div style="left:792px;top:459px;width:45px;height:28px;box-shadow:inset 0 0 0 1px rgba(60,60,60,0.12),inset 0 0 0 2px rgba(60,60,60,0.05);"></div>
<div style="left:838px;top:459px;width:74px;height:28px;box-shadow:inset 0 0 0 1px rgba(60,60,60,0.12),inset 0 0 0 2px rgba(60,60,60,0.05);"></div>
<div style="left:27px;top:488px;width:19px;height:19px;box-shadow:inset 0 0 0 1px rgba(60,60,60,0.12),inset 0 0 0 2px rgba(60,60,60,0.05);"></div>
<div style="left:47px;top:488px;width:20px;height:19px;box-shadow:inset 0 0 0 1px rgba(60,60,60,0.12),inset 0 0 0 2px rgba(60,60,60,0.05);"></div>
<div style="left:68px;top:488px;width:94px;height:19px;box-shadow:inset 0 0 0 1px rgba(60,60,60,0.12),inset 0 0 0 2px rgba(60,60,60,0.05);"></div>
<div style="left:163px;top:488px;width:44px;height:19px;box-shadow:inset 0 0 0 1px rgba(60,60,60,0.12),inset 0 0 0 2px rgba(60,60,60,0.05);"></div>
<div style="left:208px;top:488px;width:407px;height:19px;box-shadow:inset 0 0 0 1px rgba(60,60,60,0.12),inset 0 0 0 2px rgba(60,60,60,0.05);"></div>
<div style="left:616px;top:488px;width:46px;height:19px;box-shadow:inset 0 0 0 1px rgba(60,60,60,0.12),inset 0 0 0 2px rgba(60,60,60,0.05);"></div>
<div style="left:663px;top:488px;width:53px;height:19px;box-shadow:inset 0 0 0 1px rgba(60,60,60,0.12),inset 0 0 0 2px rgba(60,60,60,0.05);"></div>
<div style="left:717px;top:488px;width:37px;height:19px;box-shadow:inset 0 0 0 1px rgba(60,60,60,0.12),inset 0 0 0 2px rgba(60,60,60,0.05);"></div>
<div style="left:755px;top:488px;width:36px;height:19px;box-shadow:inset 0 0 0 1px rgba(60,60,60,0.12),inset 0 0 0 2px rgba(60,60,60,0.05);"></div>
<div style="left:792px;top:488px;width:45px;height:19px;box-shadow:inset 0 0 0 1px rgba(60,60,60,0.12),inset 0 0 0 2px rgba(60,60,60,0.05);"></div>
<div style="left:838px;top:488px;width:74px;height:19px;box-shadow:inset 0 0 0 1px rgba(60,60,60,0.12),inset 0 0 0 2px rgba(60,60,60,0.05);"></div>
<div style="left:27px;top:508px;width:19px;height:19px;box-shadow:inset 0 0 0 1px rgba(60,60,60,0.12),inset 0 0 0 2px rgba(60,60,60,0.05);"></div>
<div style="left:47px;top:508px;width:20px;height:19px;box-shadow:inset 0 0 0 1px rgba(60,60,60,0.12),inset 0 0 0 2px rgba(60,60,60,0.05);"></div>
<div style="left:68px;top:508px;width:94px;height:19px;box-shadow:inset 0 0 0 1px rgba(60,60,60,0.12),inset 0 0 0 2px rgba(60,60,60,0.05);"></div>
<div style="left:163px;top:508px;width:44px;height:19px;box-shadow:inset 0 0 0 1px rgba(60,60,60,0.12),inset 0 0 0 2px rgba(60,60,60,0.05);"></div>
<div style="left:208px;top:508px;width:407px;height:19px;box-shadow:inset 0 0 0 1px rgba(60,60,60,0.12),inset 0 0 0 2px rgba(60,60,60,0.05);"></div>
<div style="left:616px;top:508px;width:46px;height:19px;box-shadow:inset 0 0 0 1px rgba(60,60,60,0.12),inset 0 0 0 2px rgba(60,60,60,0.05);"></div>
<div style="left:663px;top:508px;width:53px;height:19px;box-shadow:inset 0 0 0 1px rgba(60,60,60,0.12),inset 0 0 0 2px rgba(60,60,60,0.05);"></div>
<div style="left:717px;top:508px;width:37px;height:19px;box-shadow:inset 0 0 0 1px rgba(60,60,60,0.12),inset 0 0 0 2px rgba(60,60,60,0.05);"></div>
<div style="left:755px;top:508px;width:36px;height:19px;box-shadow:inset 0 0 0 1px rgba(60,60,60,0.12),inset 0 0 0 2px rgba(60,60,60,0.05);"></div>
<div style="left:792px;top:508px;width:45px;height:19px;box-shadow:inset 0 0 0 1px rgba(60,60,60,0.12),inset 0 0 0 2px rgba(60,60,60,0.05);"></div>
<div style="left:838px;top:508px;width:74px;height:19px;box-shadow:inset 0 0 0 1px rgba(60,60,60,0.12),inset 0 0 0 2px rgba(60,60,60,0.05);"></div>
<div style="left:27px;top:528px;width:19px;height:19px;box-shadow:inset 0 0 0 1px rgba(60,60,60,0.12),inset 0 0 0 2px rgba(60,60,60,0.05);"></div>
<div style="left:47px;top:528px;width:20px;height:19px;box-shadow:inset 0 0 0 1px rgba(60,60,60,0.12),inset 0 0 0 2px rgba(60,60,60,0.05);"></div>
<div style="left:68px;top:528px;width:94px;height:19px;box-shadow:inset 0 0 0 1px rgba(60,60,60,0.12),inset 0 0 0 2px rgba(60,60,60,0.05);"></div>
<div style="left:163px;top:528px;width:44px;height:19px;box-shadow:inset 0 0 0 1px rgba(60,60,60,0.12),inset 0 0 0 2px rgba(60,60,60,0.05);"></div>
<div style="left:208px;top:528px;width:407px;height:19px;box-shadow:inset 0 0 0 1px rgba(60,60,60,0.12),inset 0 0 0 2px rgba(60,60,60,0.05);"></div>
<div style="left:616px;top:528px;width:46px;height:19px;box-shadow:inset 0 0 0 1px rgba(60,60,60,0.12),inset 0 0 0 2px rgba(60,60,60,0.05);"></div>
<div style="left:663px;top:528px;width:53px;height:19px;box-shadow:inset 0 0 0 1px rgba(60,60,60,0.12),inset 0 0 0 2px rgba(60,60,60,0.05);"></div>
<div style="left:717px;top:528px;width:37px;height:19px;box-shadow:inset 0 0 0 1px rgba(60,60,60,0.12),inset 0 0 0 2px rgba(60,60,60,0.05);"></div>
<div style="left:755px;top:528px;width:36px;height:19px;box-shadow:inset 0 0 0 1px rgba(60,60,60,0.12),inset 0 0 0 2px rgba(60,60,60,0.05);"></div>
<div style="left:792px;top:528px;width:45px;height:19px;box-shadow:inset 0 0 0 1px rgba(60,60,60,0.12),inset 0 0 0 2px rgba(60,60,60,0.05);"></div>
<div style="left:838px;top:528px;width:74px;height:19px;box-shadow:inset 0 0 0 1px rgba(60,60,60,0.12),inset 0 0 0 2px rgba(60,60,60,0.05);"></div>
<div style="left:27px;top:548px;width:19px;height:20px;box-shadow:inset 0 0 0 1px rgba(60,60,60,0.12),inset 0 0 0 2px rgba(60,60,60,0.05);"></div>
<div style="left:47px;top:548px;width:20px;height:20px;box-shadow:inset 0 0 0 1px rgba(60,60,60,0.12),inset 0 0 0 2px rgba(60,60,60,0.05);"></div>
<div style="left:68px;top:548px;width:94px;height:20px;box-shadow:inset 0 0 0 1px rgba(60,60,60,0.12),inset 0 0 0 2px rgba(60,60,60,0.05);"></div>
<div style="left:163px;top:548px;width:44px;height:20px;box-shadow:inset 0 0 0 1px rgba(60,60,60,0.12),inset 0 0 0 2px rgba(60,60,60,0.05);"></div>
<div style="left:208px;top:548px;width:407px;height:20px;box-shadow:inset 0 0 0 1px rgba(60,60,60,0.12),inset 0 0 0 2px rgba(60,60,60,0.05);"></div>
<div style="left:616px;top:548px;width:46px;height:20px;box-shadow:inset 0 0 0 1px rgba(60,60,60,0.12),inset 0 0 0 2px rgba(60,60,60,0.05);"></div>
<div style="left:663px;top:548px;width:53px;height:20px;box-shadow:inset 0 0 0 1px rgba(60,60,60,0.12),inset 0 0 0 2px rgba(60,60,60,0.05);"></div>
<div style="left:717px;top:548px;width:37px;height:20px;box-shadow:inset 0 0 0 1px rgba(60,60,60,0.12),inset 0 0 0 2px rgba(60,60,60,0.05);"></div>
<div style="left:755px;top:548px;width:36px;height:20px;box-shadow:inset 0 0 0 1px rgba(60,60,60,0.12),inset 0 0 0 2px rgba(60,60,60,0.05);"></div>
<div style="left:792px;top:548px;width:45px;height:20px;box-shadow:inset 0 0 0 1px rgba(60,60,60,0.12),inset 0 0 0 2px rgba(60,60,60,0.05);"></div>
<div style="left:838px;top:548px;width:74px;height:20px;box-shadow:inset 0 0 0 1px rgba(60,60,60,0.12),inset 0 0 0 2px rgba(60,60,60,0.05);"></div>
<div style="left:27px;top:569px;width:19px;height:18px;box-shadow:inset 0 0 0 1px rgba(60,60,60,0.12),inset 0 0 0 2px rgba(60,60,60,0.05);"></div>
<div style="left:47px;top:569px;width:20px;height:18px;box-shadow:inset 0 0 0 1px rgba(60,60,60,0.12),inset 0 0 0 2px rgba(60,60,60,0.05);"></div>
<div style="left:68px;top:569px;width:94px;height:18px;box-shadow:inset 0 0 0 1px rgba(60,60,60,0.12),inset 0 0 0 2px rgba(60,60,60,0.05);"></div>
<div style="left:163px;top:569px;width:44px;height:18px;box-shadow:inset 0 0 0 1px rgba(60,60,60,0.12),inset 0 0 0 2px rgba(60,60,60,0.05);"></div>
<div style="left:208px;top:569px;width:407px;height:18px;box-shadow:inset 0 0 0 1px rgba(60,60,60,0.12),inset 0 0 0 2px rgba(60,60,60,0.05);"></div>
<div style="left:616px;top:569px;width:46px;height:18px;box-shadow:inset 0 0 0 1px rgba(60,60,60,0.12),inset 0 0 0 2px rgba(60,60,60,0.05);"></div>
<div style="left:663px;top:569px;width:53px;height:18px;box-shadow:inset 0 0 0 1px rgba(60,60,60,0.12),inset 0 0 0 2px rgba(60,60,60,0.05);"></div>
<div style="left:717px;top:569px;width:37px;height:18px;box-shadow:inset 0 0 0 1px rgba(60,60,60,0.12),inset 0 0 0 2px rgba(60,60,60,0.05);"></div>
<div style="left:755px;top:569px;width:36px;height:18px;box-shadow:inset 0 0 0 1px rgba(60,60,60,0.12),inset 0 0 0 2px rgba(60,60,60,0.05);"></div>
<div style="left:792px;top:569px;width:45px;height:18px;box-shadow:inset 0 0 0 1px rgba(60,60,60,0.12),inset 0 0 0 2px rgba(60,60,60,0.05);"></div>
<div style="left:838px;top:569px;width:74px;height:18px;box-shadow:inset 0 0 0 1px rgba(60,60,60,0.12),inset 0 0 0 2px rgba(60,60,60,0.05);"></div>
<div style="left:46px;top:457px;width:1px;height:131px;background:#151515;"></div>
<div style="left:67px;top:457px;width:1px;height:131px;background:#151515;"></div>
<div style="left:162px;top:457px;width:1px;height:131px;background:#151515;"></div>
<div style="left:207px;top:457px;width:1px;height:131px;background:#151515;"></div>
<div style="left:615px;top:457px;width:1px;height:131px;background:#151515;"></div>
<div style="left:662px;top:457px;width:1px;height:131px;background:#151515;"></div>
<div style="left:716px;top:457px;width:1px;height:131px;background:#151515;"></div>
<div style="left:754px;top:457px;width:1px;height:131px;background:#151515;"></div>
<div style="left:791px;top:457px;width:1px;height:131px;background:#151515;"></div>
<div style="left:837px;top:457px;width:1px;height:131px;background:#151515;"></div>
<div style="left:912px;top:457px;width:1px;height:131px;background:#151515;"></div>
<div style="left:25px;top:487px;width:888px;height:1px;background:#151515;"></div>
<div style="left:25px;top:507px;width:888px;height:1px;background:#151515;"></div>
<div style="left:25px;top:527px;width:888px;height:1px;background:#151515;"></div>
<div style="left:25px;top:547px;width:888px;height:1px;background:#151515;"></div>
<div style="left:25px;top:568px;width:888px;height:1px;background:#151515;"></div>
<div style="left:25px;top:587px;width:888px;height:1px;background:#151515;"></div>
<div style="left:25px;top:456px;width:925px;height:2px;background:#1a1a1a;"></div>
<div style="left:25px;top:456px;width:2px;height:132px;background:#1a1a1a;"></div>
<span class="t" style="top:468.99px;font-size:9.2px;line-height:9.2px;height:9.2px;color:#111;font-weight:bold;left:32.55px;transform-origin:left center;transform:scaleX(1.2706);">#</span>
<span class="t" style="top:468.99px;font-size:9.2px;line-height:9.2px;height:9.2px;color:#111;font-weight:bold;left:49.0px;transform-origin:left center;transform:scaleX(1.0457);">Old</span>
<span class="t" style="top:468.99px;font-size:9.2px;line-height:9.2px;height:9.2px;color:#111;font-weight:bold;left:90.55px;transform-origin:left center;transform:scaleX(1.0140);">Layer Type</span>
<span class="t" style="top:462.49px;font-size:9.2px;line-height:9.2px;height:9.2px;color:#111;font-weight:bold;left:175.2px;transform-origin:left center;transform:scaleX(1.0952);">Age</span>
<span class="t" style="top:475.99px;font-size:9.2px;line-height:9.2px;height:9.2px;color:#111;font-weight:bold;left:177.7px;transform-origin:left center;transform:scaleX(1.1941);">(d)</span>
<span class="t" style="top:468.99px;font-size:9.2px;line-height:9.2px;height:9.2px;color:#111;font-weight:bold;left:392.0px;transform-origin:left center;transform:scaleX(1.1088);">Material</span>
<span class="t" style="top:462.49px;font-size:9.2px;line-height:9.2px;height:9.2px;color:#111;font-weight:bold;left:616.95px;transform-origin:left center;transform:scaleX(0.9794);">Thickness</span>
<span class="t" style="top:475.99px;font-size:9.2px;line-height:9.2px;height:9.2px;color:#111;font-weight:bold;left:630.95px;transform-origin:left center;transform:scaleX(1.3000);">(ft)</span>
<span class="t" style="top:462.49px;font-size:9.2px;line-height:9.2px;height:9.2px;color:#111;font-weight:bold;left:665.45px;transform-origin:left center;transform:scaleX(1.0226);">Modulus-E</span>
<span class="t" style="top:475.99px;font-size:9.2px;line-height:9.2px;height:9.2px;color:#111;font-weight:bold;left:679.45px;transform-origin:left center;transform:scaleX(1.0585);">(ksi)</span>
<span class="t" style="top:468.99px;font-size:9.2px;line-height:9.2px;height:9.2px;color:#111;font-weight:bold;left:717.65px;transform-origin:left center;transform:scaleX(1.0545);">R-value</span>
<span class="t" style="top:468.99px;font-size:9.2px;line-height:9.2px;height:9.2px;color:#111;font-weight:bold;left:766.05px;transform-origin:left center;transform:scaleX(1.0585);">GF</span>
<span class="t" style="top:462.49px;font-size:9.2px;line-height:9.2px;height:9.2px;color:#111;font-weight:bold;left:804.05px;transform-origin:left center;transform:scaleX(1.0044);">Cost</span>
<span class="t" style="top:475.99px;font-size:9.2px;line-height:9.2px;height:9.2px;color:#111;font-weight:bold;left:799.3px;transform-origin:left center;transform:scaleX(1.1997);">($/ft3)</span>
<span class="t" style="top:468.99px;font-size:9.2px;line-height:9.2px;height:9.2px;color:#111;font-weight:bold;left:857.55px;transform-origin:left center;transform:scaleX(1.0240);">Actions</span>
<span class="t" style="top:492.80px;font-size:9.7px;line-height:9.7px;height:9.7px;color:#1515e8;text-decoration:underline;left:32.92px;transform-origin:left center;transform:scaleX(0.9400);">1</span>
<div style="left:52.3px;top:492.4px;width:9.4px;height:9.5px;box-sizing:border-box;border:1px solid #d4d4d4;border-radius:2px;background:#e9e9e9;"></div>
<span class="t" style="top:492.80px;font-size:9.7px;line-height:9.7px;height:9.7px;color:#111;left:69.12px;transform-origin:left center;transform:scaleX(1.0017);">HMA</span>
<span class="t" style="top:492.80px;font-size:9.7px;line-height:9.7px;height:9.7px;color:#111;right:769.5px;transform-origin:right center;transform:scaleX(1.0729);">90</span>
<span class="t" style="top:492.80px;font-size:9.7px;line-height:9.7px;height:9.7px;color:#1515e8;text-decoration:underline;left:209.42px;transform-origin:left center;transform:scaleX(0.9756);">2020 Standard HMA Type A Mix with PG 64-28M polymer modified binder for non-PRS Projects</span>
<span class="t" style="top:492.80px;font-size:9.7px;line-height:9.7px;height:9.7px;color:#111;right:314.5px;transform-origin:right center;transform:scaleX(0.9580);">0.20</span>
<span class="t" style="top:492.80px;font-size:9.7px;line-height:9.7px;height:9.7px;color:#111;right:260.70000000000005px;transform-origin:right center;transform:scaleX(0.9512);">572.0</span>
<span class="t" style="top:492.80px;font-size:9.7px;line-height:9.7px;height:9.7px;color:#111;right:223px;transform-origin:right center;transform:scaleX(1.0873);">N/A</span>
<span class="t" style="top:492.80px;font-size:9.7px;line-height:9.7px;height:9.7px;color:#111;right:185.70000000000005px;transform-origin:right center;transform:scaleX(0.9580);">1.64</span>
<span class="t" style="top:492.80px;font-size:9.7px;line-height:9.7px;height:9.7px;color:#111;right:140px;transform-origin:right center;transform:scaleX(0.9845);">0.00</span>
<span class="t" style="top:492.80px;font-size:9.7px;line-height:9.7px;height:9.7px;color:#1515e8;text-decoration:underline;left:838.42px;transform-origin:left center;transform:scaleX(1.0218);">Edit</span>
<span class="t" style="top:492.80px;font-size:9.7px;line-height:9.7px;height:9.7px;color:#1515e8;text-decoration:underline;left:857.42px;transform-origin:left center;transform:scaleX(0.9840);">Delete</span>
<span class="t" style="top:492.80px;font-size:9.7px;line-height:9.7px;height:9.7px;color:#1515e8;text-decoration:underline;left:886.92px;transform-origin:left center;transform:scaleX(0.9931);">Insert</span>
<span class="t" style="top:513.15px;font-size:9.7px;line-height:9.7px;height:9.7px;color:#1515e8;text-decoration:underline;left:32.92px;transform-origin:left center;transform:scaleX(0.9400);">2</span>
<div style="left:52.3px;top:512.8px;width:9.4px;height:9.4px;box-sizing:border-box;border:1px solid #d4d4d4;border-radius:2px;background:#e9e9e9;"></div>
<span class="t" style="top:513.15px;font-size:9.7px;line-height:9.7px;height:9.7px;color:#111;left:69.12px;transform-origin:left center;transform:scaleX(1.0017);">HMA</span>
<span class="t" style="top:513.15px;font-size:9.7px;line-height:9.7px;height:9.7px;color:#111;right:769.5px;transform-origin:right center;transform:scaleX(1.0729);">90</span>
<span class="t" style="top:513.15px;font-size:9.7px;line-height:9.7px;height:9.7px;color:#1515e8;text-decoration:underline;left:209.42px;transform-origin:left center;transform:scaleX(0.9605);">2020 Standard HMA Type A Mix with 25% RAP for non-PRS Projects</span>
<span class="t" style="top:513.15px;font-size:9.7px;line-height:9.7px;height:9.7px;color:#111;right:314.5px;transform-origin:right center;transform:scaleX(0.9580);">0.20</span>
<span class="t" style="top:513.15px;font-size:9.7px;line-height:9.7px;height:9.7px;color:#111;right:260.70000000000005px;transform-origin:right center;transform:scaleX(0.9765);">1,207.6</span>
<span class="t" style="top:513.15px;font-size:9.7px;line-height:9.7px;height:9.7px;color:#111;right:223px;transform-origin:right center;transform:scaleX(1.0873);">N/A</span>
<span class="t" style="top:513.15px;font-size:9.7px;line-height:9.7px;height:9.7px;color:#111;right:185.70000000000005px;transform-origin:right center;transform:scaleX(0.9580);">1.64</span>
<span class="t" style="top:513.15px;font-size:9.7px;line-height:9.7px;height:9.7px;color:#111;right:140px;transform-origin:right center;transform:scaleX(0.9845);">0.00</span>
<span class="t" style="top:513.15px;font-size:9.7px;line-height:9.7px;height:9.7px;color:#1515e8;text-decoration:underline;left:838.42px;transform-origin:left center;transform:scaleX(1.0218);">Edit</span>
<span class="t" style="top:513.15px;font-size:9.7px;line-height:9.7px;height:9.7px;color:#1515e8;text-decoration:underline;left:857.42px;transform-origin:left center;transform:scaleX(0.9840);">Delete</span>
<span class="t" style="top:513.15px;font-size:9.7px;line-height:9.7px;height:9.7px;color:#1515e8;text-decoration:underline;left:886.92px;transform-origin:left center;transform:scaleX(0.9931);">Insert</span>
<span class="t" style="top:533.35px;font-size:9.7px;line-height:9.7px;height:9.7px;color:#1515e8;text-decoration:underline;left:32.92px;transform-origin:left center;transform:scaleX(0.9400);">3</span>
<div style="left:52.3px;top:533px;width:9.4px;height:9.4px;box-sizing:border-box;border:1px solid #d4d4d4;border-radius:2px;background:#e9e9e9;"></div>
<span class="t" style="top:533.35px;font-size:9.7px;line-height:9.7px;height:9.7px;color:#111;left:69.12px;transform-origin:left center;transform:scaleX(0.8767);">CCPR</span>
<span class="t" style="top:533.35px;font-size:9.7px;line-height:9.7px;height:9.7px;color:#111;right:769.5px;transform-origin:right center;transform:scaleX(1.0729);">90</span>
<span class="t" style="top:533.35px;font-size:9.7px;line-height:9.7px;height:9.7px;color:#1515e8;text-decoration:underline;left:209.42px;transform-origin:left center;transform:scaleX(0.9109);">2020 Standard CCPR-EA or CCPR-FA</span>
<span class="t" style="top:533.35px;font-size:9.7px;line-height:9.7px;height:9.7px;color:#111;right:314.5px;transform-origin:right center;transform:scaleX(0.9580);">1.10</span>
<span class="t" style="top:533.35px;font-size:9.7px;line-height:9.7px;height:9.7px;color:#111;right:260.70000000000005px;transform-origin:right center;transform:scaleX(0.9512);">261.1</span>
<span class="t" style="top:533.35px;font-size:9.7px;line-height:9.7px;height:9.7px;color:#111;right:223px;transform-origin:right center;transform:scaleX(1.0873);">N/A</span>
<span class="t" style="top:533.35px;font-size:9.7px;line-height:9.7px;height:9.7px;color:#111;right:185.70000000000005px;transform-origin:right center;transform:scaleX(0.9580);">1.50</span>
<span class="t" style="top:533.35px;font-size:9.7px;line-height:9.7px;height:9.7px;color:#111;right:140px;transform-origin:right center;transform:scaleX(0.9845);">0.00</span>
<span class="t" style="top:533.35px;font-size:9.7px;line-height:9.7px;height:9.7px;color:#1515e8;text-decoration:underline;left:838.42px;transform-origin:left center;transform:scaleX(1.0218);">Edit</span>
<span class="t" style="top:533.35px;font-size:9.7px;line-height:9.7px;height:9.7px;color:#1515e8;text-decoration:underline;left:857.42px;transform-origin:left center;transform:scaleX(0.9840);">Delete</span>
<span class="t" style="top:533.35px;font-size:9.7px;line-height:9.7px;height:9.7px;color:#1515e8;text-decoration:underline;left:886.92px;transform-origin:left center;transform:scaleX(0.9931);">Insert</span>
<span class="t" style="top:553.45px;font-size:9.7px;line-height:9.7px;height:9.7px;color:#1515e8;text-decoration:underline;left:32.92px;transform-origin:left center;transform:scaleX(0.9400);">4</span>
<div style="left:52.3px;top:553.1px;width:9.4px;height:9.4px;box-sizing:border-box;border:1px solid #d4d4d4;border-radius:2px;background:#e9e9e9;"></div>
<span class="t" style="top:553.45px;font-size:9.7px;line-height:9.7px;height:9.7px;color:#111;left:69.12px;transform-origin:left center;transform:scaleX(0.8528);">TS</span>
<span class="t" style="top:553.45px;font-size:9.7px;line-height:9.7px;height:9.7px;color:#111;right:769.5px;transform-origin:right center;transform:scaleX(1.0729);">28</span>
<span class="t" style="top:553.45px;font-size:9.7px;line-height:9.7px;height:9.7px;color:#1515e8;text-decoration:underline;left:209.42px;transform-origin:left center;transform:scaleX(0.9187);">2020 Standard CSS (Needs UCS)</span>
<span class="t" style="top:553.45px;font-size:9.7px;line-height:9.7px;height:9.7px;color:#111;right:314.5px;transform-origin:right center;transform:scaleX(0.9580);">1.00</span>
<span class="t" style="top:553.45px;font-size:9.7px;line-height:9.7px;height:9.7px;color:#111;right:260.70000000000005px;transform-origin:right center;transform:scaleX(0.9803);">119.9</span>
<span class="t" style="top:553.45px;font-size:9.7px;line-height:9.7px;height:9.7px;color:#111;right:223px;transform-origin:right center;transform:scaleX(1.0873);">N/A</span>
<span class="t" style="top:553.45px;font-size:9.7px;line-height:9.7px;height:9.7px;color:#111;right:185.70000000000005px;transform-origin:right center;transform:scaleX(1.0873);">N/A</span>
<span class="t" style="top:553.45px;font-size:9.7px;line-height:9.7px;height:9.7px;color:#111;right:140px;transform-origin:right center;transform:scaleX(0.9845);">0.00</span>
<span class="t" style="top:553.45px;font-size:9.7px;line-height:9.7px;height:9.7px;color:#1515e8;text-decoration:underline;left:838.42px;transform-origin:left center;transform:scaleX(1.0218);">Edit</span>
<span class="t" style="top:553.45px;font-size:9.7px;line-height:9.7px;height:9.7px;color:#1515e8;text-decoration:underline;left:857.42px;transform-origin:left center;transform:scaleX(0.9840);">Delete</span>
<span class="t" style="top:553.45px;font-size:9.7px;line-height:9.7px;height:9.7px;color:#1515e8;text-decoration:underline;left:886.92px;transform-origin:left center;transform:scaleX(0.9931);">Insert</span>
<span class="t" style="top:574.45px;font-size:9.7px;line-height:9.7px;height:9.7px;color:#1515e8;text-decoration:underline;left:32.92px;transform-origin:left center;transform:scaleX(0.9400);">5</span>
<div style="left:52.3px;top:574.1px;width:9.4px;height:9.4px;box-sizing:border-box;border:1px solid #d4d4d4;border-radius:2px;background:#cdcdcd;"><svg width="10" height="10" viewBox="0 0 10 10" style="position:absolute;left:-1px;top:-1px"><path d="M2.2 5.2 L4.2 7.2 L7.8 2.8" fill="none" stroke="#f4f4f4" stroke-width="1.4"/></svg></div>
<span class="t" style="top:574.45px;font-size:9.7px;line-height:9.7px;height:9.7px;color:#111;left:69.12px;transform-origin:left center;transform:scaleX(0.9774);">Subgrade</span>
<span class="t" style="top:574.45px;font-size:9.7px;line-height:9.7px;height:9.7px;color:#111;right:769.5px;transform-origin:right center;transform:scaleX(1.1183);">N/A</span>
<span class="t" style="top:574.45px;font-size:9.7px;line-height:9.7px;height:9.7px;color:#1515e8;text-decoration:underline;left:209.42px;transform-origin:left center;transform:scaleX(0.9291);">2020 Standard SC</span>
<div style="left:633px;top:576px;width:13px;height:9px;"><svg width="13" height="9" viewBox="0 0 13 9" style="position:absolute;left:0;top:0"><circle cx="3.85" cy="4.3" r="2.15" fill="none" stroke="#2626f4" stroke-width="1.7"/><circle cx="8.55" cy="4.3" r="2.15" fill="none" stroke="#2626f4" stroke-width="1.7"/></svg></div>
<span class="t" style="top:574.45px;font-size:9.7px;line-height:9.7px;height:9.7px;color:#111;right:260.70000000000005px;transform-origin:right center;transform:scaleX(0.9702);">3.6</span>
<span class="t" style="top:574.45px;font-size:9.7px;line-height:9.7px;height:9.7px;color:#111;right:223px;transform-origin:right center;transform:scaleX(1.1255);">5</span>
<span class="t" style="top:574.45px;font-size:9.7px;line-height:9.7px;height:9.7px;color:#111;right:185.70000000000005px;transform-origin:right center;transform:scaleX(1.0873);">N/A</span>
<span class="t" style="top:574.45px;font-size:9.7px;line-height:9.7px;height:9.7px;color:#111;right:140px;transform-origin:right center;transform:scaleX(0.9845);">0.00</span>
<span class="t" style="top:574.45px;font-size:9.7px;line-height:9.7px;height:9.7px;color:#1515e8;text-decoration:underline;left:838.42px;transform-origin:left center;transform:scaleX(1.0218);">Edit</span>
<span class="t" style="top:574.45px;font-size:9.7px;line-height:9.7px;height:9.7px;color:#1515e8;text-decoration:underline;left:857.42px;transform-origin:left center;transform:scaleX(0.9840);">Delete</span>
<span class="t" style="top:574.45px;font-size:9.7px;line-height:9.7px;height:9.7px;color:#1515e8;text-decoration:underline;left:886.92px;transform-origin:left center;transform:scaleX(0.9931);">Insert</span>
<div style="left:933px;top:458px;width:16px;height:129px;background:#f1f1f1;"></div>
<div style="left:935px;top:473px;width:11px;height:95.5px;background:#c1c1c1;"></div>
<div style="left:937px;top:462.5px;width:7px;height:4.5px;"><svg width="7" height="4.5" viewBox="0 0 7 4.5" style="position:absolute;left:0;top:0"><path d="M0 4.5 L3.5 0 L7 4.5Z" fill="#a3a3a3"/></svg></div>
<div style="left:937px;top:576px;width:7px;height:4.5px;"><svg width="7" height="4.5" viewBox="0 0 7 4.5" style="position:absolute;left:0;top:0"><path d="M0 0 L3.5 4.5 L7 0Z" fill="#505050"/></svg></div>
<div style="left:25px;top:592px;width:62.5px;height:16.5px;box-sizing:border-box;background:#cbcbcb;border:1px solid #b4b4b4;border-radius:2px;"></div>
<span class="t" style="top:595.07px;font-size:12px;line-height:12px;height:12px;color:#9a9a9a;left:30.78px;transform-origin:left center;transform:scaleX(0.9290);">Add Layer</span>
<div style="left:107.5px;top:592px;width:76.5px;height:16.5px;box-sizing:border-box;background:#cbcbcb;border:1px solid #b4b4b4;border-radius:2px;"></div>
<span class="t" style="top:595.07px;font-size:12px;line-height:12px;height:12px;color:#9a9a9a;left:113.03px;transform-origin:left center;transform:scaleX(0.9237);">Add 2 Layers</span>
<div style="left:188.5px;top:592px;width:76.5px;height:16.5px;box-sizing:border-box;background:#cbcbcb;border:1px solid #b4b4b4;border-radius:2px;"></div>
<span class="t" style="top:595.07px;font-size:12px;line-height:12px;height:12px;color:#9a9a9a;left:194.03px;transform-origin:left center;transform:scaleX(0.9237);">Add 3 Layers</span>
<div style="left:268.5px;top:592px;width:77px;height:16.5px;box-sizing:border-box;background:#cbcbcb;border:1px solid #b4b4b4;border-radius:2px;"></div>
<span class="t" style="top:595.07px;font-size:12px;line-height:12px;height:12px;color:#9a9a9a;left:274.28px;transform-origin:left center;transform:scaleX(0.9237);">Add 4 Layers</span>
<div style="left:350px;top:592px;width:77px;height:16.5px;box-sizing:border-box;background:#cbcbcb;border:1px solid #b4b4b4;border-radius:2px;"></div>
<span class="t" style="top:595.07px;font-size:12px;line-height:12px;height:12px;color:#9a9a9a;left:355.78px;transform-origin:left center;transform:scaleX(0.9237);">Add 5 Layers</span>
<span class="t" style="top:595.57px;font-size:11.5px;line-height:11.5px;height:11.5px;color:#f81c1c;-webkit-text-stroke:0.45px #f81c1c;left:438.01px;transform-origin:left center;transform:scaleX(0.9119);">For SC Subgrade, AB-min is 0.35 or Equiv.</span>
</div></body></html>
